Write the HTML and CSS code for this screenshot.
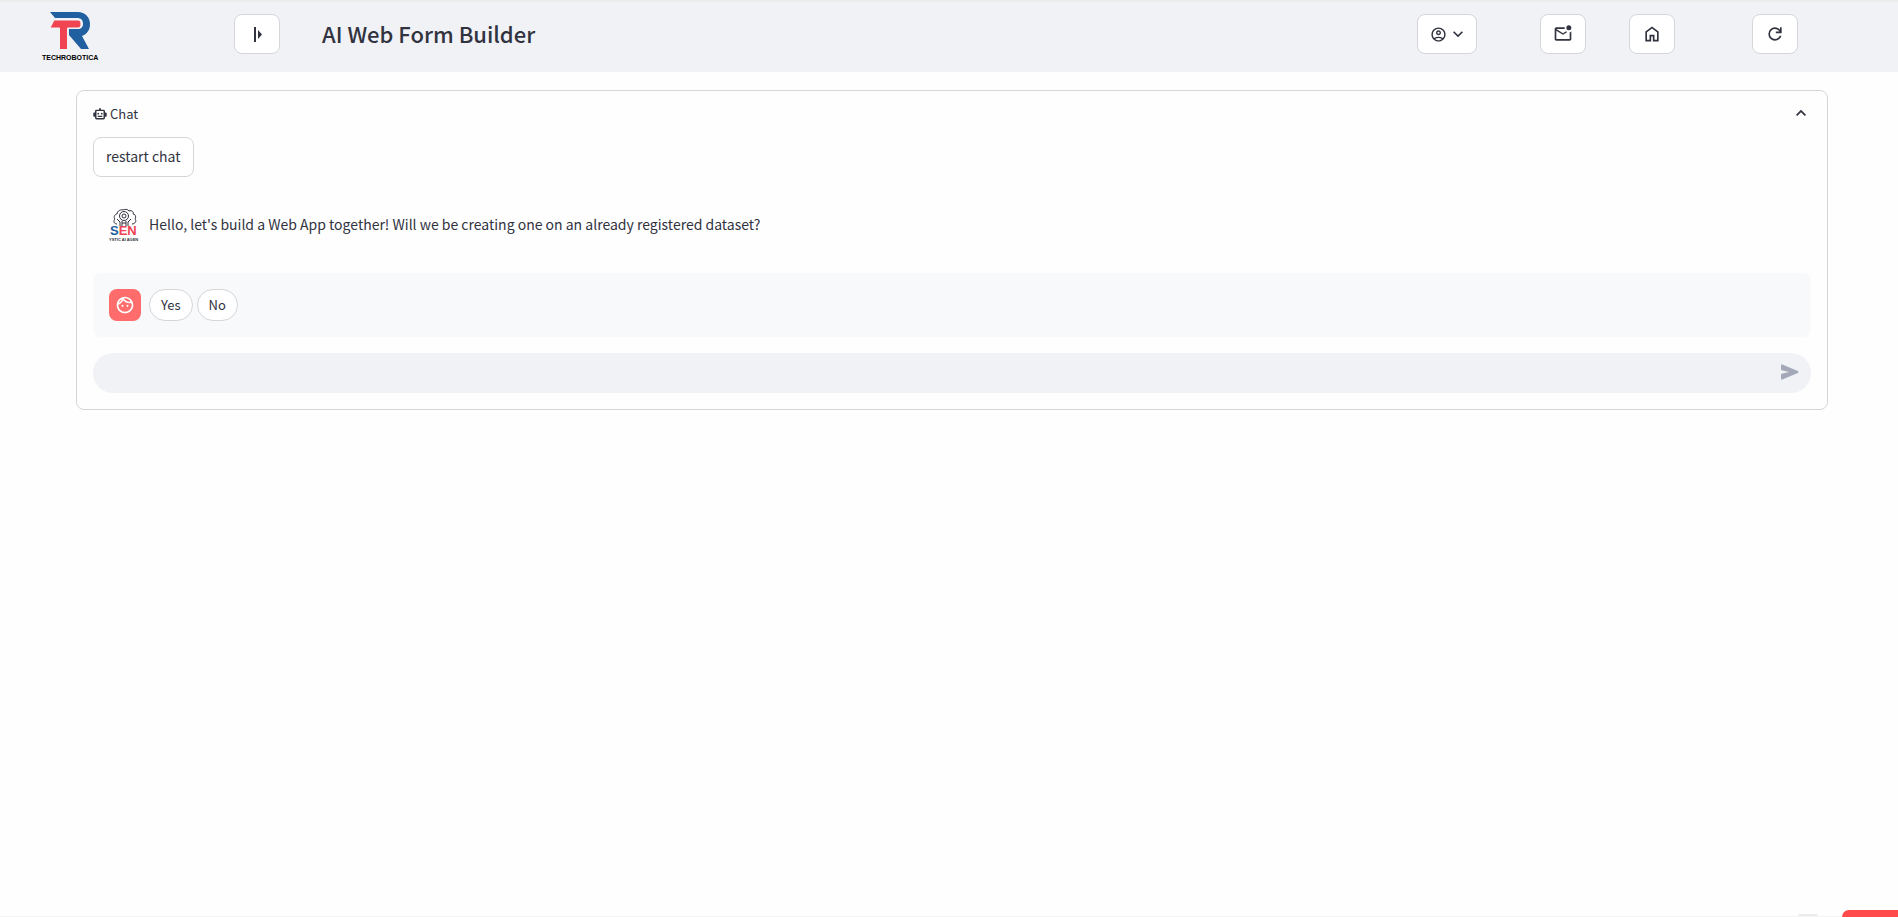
FILE: index.html
```
<!DOCTYPE html>
<html lang="en">
<head>
  <meta charset="UTF-8">
  <meta name="viewport" content="width=device-width, initial-scale=1.0">
  <title>AI Web Form Builder</title>
  <link rel="stylesheet" href="styles.css">
</head>
<body>
  <header class="topbar">
    <svg class="logo" viewBox="0 0 58 50" role="img" aria-label="Techrobotica">
      <path fill="#2160a0" d="M8 0H36C43 0 48 5 48 12C48 18 45 22 40 24L47 37H39L27 23V17H36C39 17 41 15 41 12C41 8 39 6 35 6H13Z"/>
      <path fill="#f04453" stroke="#f0f2f6" stroke-width="1" d="M12 8H36C40 8 40 16 36 16H25.500V37.500H17.500V16H8Z"/>
      <text x="0" y="48" class="logo__name">TECHROBOTICA</text>
    </svg>
    <button class="btn btn--icon" type="button" aria-label="Open sidebar">
      <svg width="20" height="20" viewBox="0 0 20 20"><path fill="currentColor" d="M7 3h2v15H7zM11 6l4 4.500-4 4.500z"/></svg>
    </button>
    <h1 class="topbar__title">AI Web Form Builder</h1>
    <button class="btn btn--account" type="button" aria-label="Account">
      <svg width="17" height="17" viewBox="0 0 24 24"><path fill="currentColor" d="M5.850 17.100q1.275-.975 2.850-1.538T12 15t3.300.563 2.850 1.537q.875-1.025 1.363-2.325T20 12q0-3.325-2.337-5.663T12 4 6.338 6.338 4 12q0 1.475.488 2.775T5.850 17.100M12 13q-1.475 0-2.488-1.012T8.500 9.500t1.012-2.488T12 6t2.488 1.012T15.500 9.500t-1.012 2.488T12 13m0 9q-2.075 0-3.900-.788t-3.175-2.137-2.137-3.175T2 12t.788-3.900 2.137-3.175T8.100 2.788 12 2t3.900.788 3.175 2.137T21.213 8.100 22 12t-.788 3.900-2.137 3.175-3.175 2.138T12 22m0-2q1.325 0 2.500-.387t2.150-1.113q-.975-.725-2.150-1.112T12 17t-2.500.388T7.350 18.500q.975.725 2.150 1.113T12 20m0-9q.65 0 1.075-.425T13.500 9.500t-.425-1.075T12 8t-1.075.425T10.500 9.500t.425 1.075T12 11"/></svg>
      <svg width="20" height="20" viewBox="0 0 24 24"><path fill="currentColor" d="M7.410 8.590 12 13.170l4.590-4.580L18 10l-6 6-6-6z"/></svg>
    </button>
    <button class="btn btn--icon" type="button" aria-label="Messages">
      <svg width="20" height="20" viewBox="0 0 24 24"><path fill="currentColor" d="M4 20q-.825 0-1.412-.587T2 18V6q0-.825.588-1.412T4 4h10.100q-.1.500-.1 1t.1 1H4l8 5 3.650-2.275q.35.325.763.563t.862.412L12 13 4 8v10h16V9.900q.575-.125 1.075-.35T22 9v9q0 .825-.587 1.413T20 20z"/><circle cx="19" cy="4.500" r="3" fill="currentColor"/></svg>
    </button>
    <button class="btn btn--icon" type="button" aria-label="Home">
      <svg width="20" height="20" viewBox="0 0 24 24"><path fill="currentColor" d="M6 19h3v-6h6v6h3v-9l-6-4.500L6 10zm-2 2V9l8-6 8 6v12h-7v-6h-2v6z"/></svg>
    </button>
    <button class="btn btn--icon" type="button" aria-label="Refresh">
      <svg width="20" height="20" viewBox="0 0 24 24"><path fill="currentColor" d="M12 20q-3.350 0-5.675-2.325T4 12t2.325-5.675T12 4q1.725 0 3.300.712T18 6.750V4h2v7h-7V9h4.200q-.8-1.400-2.187-2.200T12 6Q9.500 6 7.750 7.750T6 12t1.750 4.250T12 18q1.925 0 3.475-1.100T17.650 14h2.100q-.7 2.650-2.850 4.325T12 20"/></svg>
    </button>
  </header>

  <main class="page">
    <details class="chat" open>
      <summary class="chat__summary">
        <svg width="14" height="14" viewBox="0 0 24 24"><path fill="currentColor" d="M10.500 4.500V3a1.500 1.500 0 0 1 3 0v1.500H18a2.500 2.500 0 0 1 2.500 2.500V9.500h1A2 2 0 0 1 23.500 12v2a2 2 0 0 1-2 2.500h-1V19a2.500 2.500 0 0 1-2.500 2.500H6A2.500 2.500 0 0 1 3.500 19v-2.500h-1A2 2 0 0 1 .5 14v-2a2 2 0 0 1 2-2.500h1V7A2.500 2.500 0 0 1 6 4.500zM6 7v12h12V7zM8 15h8v2H8z"/><circle cx="9" cy="11.500" r="1.500" fill="currentColor"/><circle cx="15" cy="11.500" r="1.500" fill="currentColor"/></svg>
        <span>Chat</span>
        <svg class="chat__arrow" width="20" height="20" viewBox="0 0 24 24"><path fill="currentColor" d="m12 7-6 6 1.410 1.410L12 9.830l4.590 4.580L18 13z"/></svg>
      </summary>
      <div class="chat__body">
        <button class="btn btn--text" type="button">restart chat</button>

        <div class="message">
          <svg class="avatar" viewBox="0 0 32 32" aria-hidden="true">
            <g fill="none" stroke="#30313d">
              <path d="M8 15c-3 0-4-3-2-5-2-2 0-5 2-5 0-3 4-5 6-4 2-1 5-1 6 1 3-1 5 1 4 3 3 0 3 4 2 5 2 2 0 5-3 5"/>
              <circle cx="15" cy="7" r="4.500"/>
              <circle cx="15" cy="7" r="2"/>
              <path d="M13 12v5m4-5v5M8 10l3 3v4m11-7-3 3v4M13 14h4"/>
            </g>
            <text class="avatar__sen" x="1" y="26" fill="#2160a0">S<tspan fill="#f04453">EN</tspan></text>
            <text class="avatar__tag" x="0" y="32" fill="#30313d">YSTIC AI AGEN</text>
          </svg>
          <p class="message__text">Hello, let's build a Web App together! Will we be creating one on an already registered dataset?</p>
        </div>

        <div class="message message--user">
          <span class="avatar avatar--user">
            <svg width="20" height="20" viewBox="0 0 24 24"><path fill="currentColor" d="M10.250 13a1.250 1.250 0 1 1-2.500 0 1.250 1.250 0 0 1 2.500 0M15 11.750a1.250 1.250 0 1 0 0 2.500 1.250 1.250 0 0 0 0-2.500m7 .25c0 5.520-4.480 10-10 10S2 17.520 2 12 6.480 2 12 2s10 4.480 10 10M10.660 4.120C12.060 6.440 14.600 8 17.500 8c.46 0 .91-.05 1.340-.12C17.440 5.560 14.900 4 12 4c-.46 0-.91.05-1.340.12M4.420 9.470c1.710-.97 3.030-2.550 3.660-4.440C6.370 6 5.050 7.580 4.420 9.470M20 12c0-.78-.12-1.530-.33-2.240-.7.150-1.420.24-2.170.24-3.130 0-5.920-1.440-7.760-3.690C8.690 8.870 6.600 10.880 4 11.860c.01.040 0 .09 0 .14 0 4.410 3.590 8 8 8s8-3.590 8-8"/></svg>
          </span>
          <div class="choices">
            <button class="pill" type="button">Yes</button>
            <button class="pill" type="button">No</button>
          </div>
        </div>

        <form class="composer">
          <input class="composer__input" type="text" aria-label="Message">
          <button class="composer__send" type="button" aria-label="Send">
            <svg width="24" height="24" viewBox="0 0 24 24"><path fill="currentColor" d="M3 4.500v3.900c0 .46.310.86.760.97L11 11l-7.240 1.800c-.45.110-.76.510-.76.970v3.730c0 .71.730 1.200 1.390.92l15.420-6.490c.82-.34.820-1.500 0-1.840L4.390 3.580C3.730 3.310 3 3.790 3 4.500"/></svg>
          </button>
        </form>
      </div>
    </details>
  </main>

  <div class="dock">
    <span class="dock__dot"></span>
    <span class="dock__tab"></span>
  </div>
</body>
</html>
```
FILE: styles.css
```
:root {
  --text: #31333f;
  --border: #d5d6d9;
  --grey: #f0f2f6;
  --red: #ff4b4b;
}
* {
  box-sizing: border-box;
}
body {
  margin: 0;
  min-height: 100vh;
  background-color: #fefefe;
  color: var(--text);
  font-family: 'Noto Sans CJK SC', 'Open Sans', sans-serif;
  font-size: 14px;
  line-height: 24px;
}
svg {
  display: block;
  flex-shrink: 0;
}
button, input {
  color: inherit;
  font: inherit;
}

/* top bar */
.topbar {
  display: grid;
  grid-template-columns: 192fr 88fr 1095fr 123fr 89fr 123fr 104fr;
  justify-items: start;
  align-items: center;
  height: 72px;
  padding: 0 42px 6px;
  background-color: var(--grey);
  border-top: 2px solid #ebedec;
}
.logo {
  width: 58px;
  height: 50px;
  margin-top: 6px;
  overflow: visible;
}
.logo__name {
  font-family: 'Liberation Sans', sans-serif;
  font-size: 7px;
  font-weight: 700;
}
.topbar__title {
  margin: 0;
  padding-bottom: 2px;
  font-size: 22px;
  font-weight: 500;
  line-height: 32px;
}
.btn {
  display: flex;
  justify-content: center;
  align-items: center;
  height: 40px;
  padding: 0 12px;
  background-color: #fff;
  border: 1px solid var(--border);
  border-radius: 8px;
  cursor: pointer;
}
.btn--account {
  gap: 1px;
  padding: 0 8px 0 12px;
}
.btn--text {
  padding-bottom: 2px;
}

/* chat panel */
.page {
  padding: 18px 70px 32px 76px;
}
.chat {
  border: 1px solid var(--border);
  border-radius: 8px;
}
.chat__summary {
  display: flex;
  align-items: center;
  gap: 3px;
  height: 46px;
  padding: 0 16px;
  font-size: 13px;
  list-style: none;
  cursor: pointer;
}
.chat__arrow {
  margin-left: auto;
}
.chat__body {
  display: flex;
  flex-direction: column;
  align-items: stretch;
  gap: 16px;
  padding: 0 16px 16px;
}
.chat__body > .btn {
  align-self: flex-start;
}
.message {
  display: flex;
  align-items: center;
  gap: 8px;
  padding: 16px;
  border-radius: 8px;
}
.message--user {
  background-color: #f8f9fb;
}
.message__text {
  margin: 0;
  padding-bottom: 2px;
}
.avatar {
  width: 32px;
  height: 32px;
  overflow: visible;
}
.avatar--user {
  display: grid;
  place-items: center;
  background-color: #ff6c6c;
  border-radius: 8px;
  color: #fff;
}
.avatar__sen {
  font-family: 'Liberation Sans', sans-serif;
  font-size: 13px;
  font-weight: 700;
}
.avatar__tag {
  font-family: 'Liberation Sans', sans-serif;
  font-size: 4px;
  font-weight: 700;
}
.choices {
  display: flex;
  gap: 4px;
}
.pill {
  height: 32px;
  padding: 0 11px;
  background-color: #fff;
  border: 1px solid var(--border);
  border-radius: 16px;
  font-size: 13px;
  cursor: pointer;
}
.composer {
  display: flex;
  align-items: center;
  height: 40px;
  padding: 0 9px 0 16px;
  background-color: var(--grey);
  border-radius: 20px;
}
.composer__input {
  flex: 1;
  min-width: 0;
  padding: 0;
  background: none;
  border: 0;
  outline: 0;
}
.composer__send {
  padding: 0;
  background: none;
  border: 0;
  color: #a3a8b8;
  cursor: pointer;
}

/* strip that peeks out of the bottom edge */
.dock {
  position: fixed;
  right: 0;
  bottom: 0;
  left: 0;
  display: flex;
  justify-content: flex-end;
  align-items: flex-end;
  gap: 24px;
  border-bottom: 1px solid #f3f3f3;
}
.dock__dot {
  width: 20px;
  height: 2px;
  background-color: #ebedec;
  border-radius: 10px 10px 0 0;
}
.dock__tab {
  width: 56px;
  height: 7px;
  margin-bottom: -1px;
  background-color: var(--red);
  border-top-left-radius: 8px;
}
```
